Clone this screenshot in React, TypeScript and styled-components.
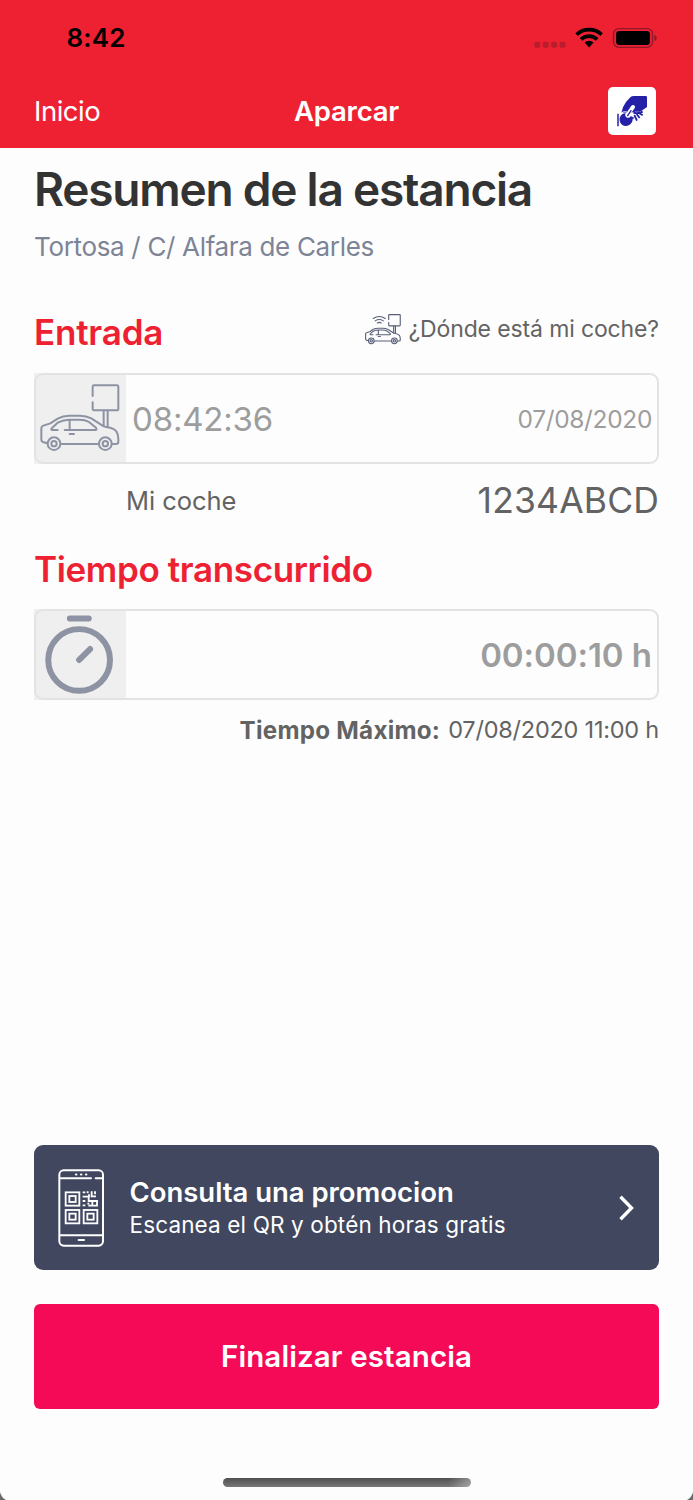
import React from 'react';
import styled, { createGlobalStyle } from 'styled-components';

const Global = createGlobalStyle`
  * { box-sizing: border-box; }
  body { margin: 0; background: #fdfdfd; font-family: Inter, "Liberation Sans", sans-serif; }
`;

const Screen = styled.div`
  position: relative;
  display: flex;
  flex-direction: column;
  width: 693px;
  height: 1500px;
  overflow: hidden;
  background: #fdfdfd;
`;

const Header = styled.header`
  height: 147.6px;
  background: #ee2133;
`;

const StatusBar = styled.div`
  display: flex;
  align-items: center;
  justify-content: space-between;
  height: 76px;
  padding: 0 36.5px 0 66.5px;
`;

const NavBar = styled.nav`
  display: grid;
  grid-template-columns: 1fr auto 1fr;
  align-items: center;
  height: 70px;
  padding: 0 37px 0 34px;
`;

const Label = styled.span<{ $size: number; $weight?: number; $color: string; $spacing?: number }>`
  font-size: ${p => p.$size}px;
  font-weight: ${p => p.$weight ?? 400};
  color: ${p => p.$color};
  letter-spacing: ${p => p.$spacing ?? 0}px;
  line-height: 1.2;
  white-space: nowrap;
`;

const NavTitle = styled(Label)`
  padding-left: 3px;
`;

const LogoTile = styled.div`
  justify-self: end;
  width: 48px;
  height: 48px;
  border-radius: 5px;
  background: #fff;
  svg { display: block; }
`;

const Main = styled.main`
  display: flex;
  flex: 1;
  flex-direction: column;
  padding: 0 34px;
`;

const Row = styled.div<{ $height: number; $indent?: number; $top?: number; $bottom?: number }>`
  display: flex;
  align-items: center;
  justify-content: space-between;
  height: ${p => p.$height}px;
  padding: ${p => p.$top ?? 0}px 0 ${p => p.$bottom ?? 0}px ${p => p.$indent ?? 0}px;
`;

const RightRow = styled(Row)`
  justify-content: flex-end;
  gap: 8px;
`;

const FindCar = styled.div`
  display: flex;
  align-items: center;
  gap: 7px;
  margin-top: -5px;
`;

const Field = styled.div`
  position: relative;
  display: flex;
  align-items: center;
  height: 91px;
  padding-right: 7px;
  &::after {
    content: '';
    position: absolute;
    inset: 0;
    border: 2px solid #e3e3e3;
    border-radius: 9px;
  }
`;

const FieldIcon = styled.div`
  display: flex;
  align-items: center;
  justify-content: center;
  width: 91.6px;
  height: 91px;
  margin-right: 6.5px;
  background: #efefef;
`;

const FieldText = styled(Label)`
  padding-top: 3px;
`;

const FieldEnd = styled.div`
  display: flex;
  margin-left: auto;
`;

const Promo = styled.button`
  display: flex;
  align-items: center;
  height: 125px;
  margin-top: auto;
  padding: 0 24px;
  border: 0;
  border-radius: 9px;
  background: #40475f;
  font-family: inherit;
  text-align: left;
`;

const PromoText = styled.span`
  display: flex;
  flex: 1;
  flex-direction: column;
  gap: 2px;
  margin: -2px 0 0 23.5px;
`;

const Finish = styled.button`
  height: 105px;
  margin: 34px 0 91px;
  padding: 1px 0 0;
  border: 0;
  border-radius: 6px;
  background: #f50a57;
  font-family: inherit;
`;

const HomeBar = styled.div`
  position: absolute;
  left: 222.5px;
  bottom: 13.5px;
  width: 248px;
  height: 9px;
  border-radius: 4.5px;
  background: linear-gradient(90deg, transparent 91%, rgba(255, 255, 255, 0.35)), linear-gradient(#505050, #787878);
`;

const Corner = styled.svg<{ $right?: boolean }>`
  position: absolute;
  bottom: 0;
  ${p => (p.$right ? 'right: 0; transform: scaleX(-1);' : 'left: 0;')}
`;

const StatusIcons = () => (
  <svg width="124" height="24" viewBox="0 0 124 24">
    <g fill="#b91d2b">
      <rect x="1.300" y="15.800" width="6" height="6" rx="1.800" />
      <rect x="9.700" y="15.800" width="6" height="6" rx="1.800" />
      <rect x="18.100" y="15.800" width="6" height="6" rx="1.800" />
      <rect x="26.500" y="15.800" width="6" height="6" rx="1.800" />
    </g>
    <g fill="none" stroke="#000" strokeWidth="3.700">
      <path d="M43.600 8.600A18.200 18.200 0 0 1 68.600 8.600" />
      <path d="M48 13.400A11.600 11.600 0 0 1 64.200 13.400" />
    </g>
    <path d="M51.700 16.600A6.400 6.400 0 0 1 60.500 16.600L56.100 21.400Z" fill="#000" />
    <rect x="80.500" y="2.600" width="39" height="18.800" rx="5.400" fill="none" stroke="#8d1a26" strokeWidth="1.400" />
    <rect x="83.100" y="5" width="33.800" height="14" rx="3.200" fill="#000" />
    <path d="M121.300 8.800Q123.800 9.600 123.800 12Q123.800 14.400 121.300 15.200Z" fill="#8d1a26" />
  </svg>
);

const Logo = () => (
  <svg width="48" height="48" viewBox="0 0 144 144">
    <g fill="#2420a8">
      <path d="M40 77Q43 60 54 45L67 31Q71 27 78 27H113Q117 27 117 31V60L101 71Q92 76 82 74L62 78Z" />
      <path d="M53 79Q49 88 57 92Q64 94 69 88L74 96Q74 107 65 113Q53 121 43 114Q33 106 35 93Q39 79 53 79Z" />
    </g>
    <path d="M40 77Q48 73 57 75" fill="none" stroke="#fff" strokeWidth="3" />
    <path d="M61 80L75 60" stroke="#fff" strokeWidth="12" strokeLinecap="round" />
    <path d="M59 86L69 71" stroke="#2420a8" strokeWidth="4" strokeLinecap="round" />
    <path d="M30 80V118" stroke="#2420a8" strokeWidth="4.500" />
    <path d="M67 90L77 94M76 77Q90 81 104 74M79 84L87 101M86 81L95 93M93 78L104 85" fill="none" stroke="#2420a8" strokeWidth="5.500" />
  </svg>
);

const CarIcon = ({ width, color, signal }: { width: number; color: string; signal?: boolean }) => (
  <svg width={width} height={(width * 202) / 240} viewBox="45 58 240 202" fill="none" stroke={color} strokeWidth={signal ? 7.5 : 6} strokeLinecap="round" strokeLinejoin="round">
    <path d="M203 94V66Q203 62 207 62H276Q280 62 280 66V132Q280 137 275 137H207Q203 137 203 133V113" />
    <path d="M236 138V184M248 138V187" />
    <path d="M67 236L54 232Q49 230 49 225V191Q49 185 55 183L76 176L98 162Q114 153 132 153H165Q184 153 199 161L228 180Q235 186 247 188Q265 190 274 200Q280 209 280 222V231Q280 238 273 238H262M108 238H220" />
    <path d="M98 196H82Q76 195 81 190L98 174Q116 165 132 165H164Q180 165 192 172L213 189Q217 196 211 196H119M134 166V195M134 208H147" />
    <circle cx="87" cy="237" r="19" />
    <circle cx="87" cy="237" r="8" />
    <circle cx="241" cy="237" r="19" />
    <circle cx="241" cy="237" r="8" />
    {signal && <path d="M100 88Q140 62 180 88M113 104Q140 86 167 104M127 118Q140 109 153 118" />}
  </svg>
);

const TimerIcon = () => (
  <svg width="92" height="91" viewBox="27 208 276 273" fill="none" stroke="#8d93a3" strokeWidth="18" strokeLinecap="round">
    <path d="M135 236H192M163 361L196 328" />
    <circle cx="163" cy="361" r="93" />
  </svg>
);

const PhoneQrIcon = () => (
  <svg width="48" height="78" viewBox="54 56 144 234" fill="none" stroke="#fff" strokeWidth="6" strokeLinecap="round">
    <rect x="58" y="60" width="131" height="226" rx="13" />
    <path d="M60 84H153M167 84H188M60 255H188" />
    <path d="M108 72.500H109M123 72.500H124M138 72.500H139M116 269H132" strokeWidth="6.500" />
    <g strokeLinecap="butt" strokeWidth="5.500">
      <rect x="77" y="126" width="41" height="40" />
      <rect x="88" y="137" width="19" height="18" />
      <rect x="77" y="179" width="41" height="40" />
      <rect x="88" y="190" width="19" height="18" />
      <rect x="131" y="179" width="41" height="40" />
      <rect x="142" y="190" width="19" height="18" />
      <path d="M128 126H136M143 123V129M128 139H147V132M155 123V138H168M165 123V132M128 152H136M128 165H136M146 138V152H174M157 152V166M145 166H171V152M142 160H148" />
    </g>
  </svg>
);

export default function App() {
  return (
    <Screen>
      <Global />
      <Header>
        <StatusBar>
          <Label $size={26} $weight={600} $color="#000" $spacing={0.2}>8:42</Label>
          <StatusIcons />
        </StatusBar>
        <NavBar>
          <Label $size={27.5} $color="#fff" $spacing={-0.5}>Inicio</Label>
          <NavTitle $size={27.5} $weight={600} $color="#fff" $spacing={-0.2}>Aparcar</NavTitle>
          <LogoTile><Logo /></LogoTile>
        </NavBar>
      </Header>
      <Main>
        <Row $height={84}>
          <Label as="h1" $size={46} $weight={600} $color="#333" $spacing={-1.21}>Resumen de la estancia</Label>
        </Row>
        <Row $height={31} $bottom={1}>
          <Label $size={26} $color="#7c8496" $spacing={-0.33}>Tortosa / C/ Alfara de Carles</Label>
        </Row>
        <Row $height={110} $top={29}>
          <Label as="h2" $size={35} $weight={600} $color="#ee2133" $spacing={-0.2}>Entrada</Label>
          <FindCar>
            <CarIcon width={36} color="#596078" signal />
            <Label $size={23} $color="#636363" $spacing={-0.13}>¿Dónde está mi coche?</Label>
          </FindCar>
        </Row>
        <Field>
          <FieldIcon><CarIcon width={80} color="#8d93a3" /></FieldIcon>
          <FieldText $size={33} $color="#9d9d9d" $spacing={-0.2}>08:42:36</FieldText>
          <FieldEnd><FieldText $size={24.5} $color="#9d9d9d" $spacing={-0.35}>07/08/2020</FieldText></FieldEnd>
        </Field>
        <Row $height={73} $indent={92} $top={2}>
          <Label $size={25.5} $color="#636363" $spacing={-0.05}>Mi coche</Label>
          <Label $size={35.5} $color="#636363" $spacing={0.15}>1234ABCD</Label>
        </Row>
        <Row $height={72} $bottom={8}>
          <Label as="h2" $size={35} $weight={600} $color="#ee2133" $spacing={-0.37}>Tiempo transcurrido</Label>
        </Row>
        <Field>
          <FieldIcon><TimerIcon /></FieldIcon>
          <FieldEnd><FieldText $size={33} $weight={600} $color="#9d9d9d" $spacing={-0.05}>00:00:10 h</FieldText></FieldEnd>
        </Field>
        <RightRow $height={59} $top={2}>
          <Label $size={24.2} $weight={700} $color="#636363" $spacing={0.25}>Tiempo Máximo:</Label>
          <Label $size={23.5} $color="#636363" $spacing={-0.23}>07/08/2020 11:00 h</Label>
        </RightRow>
        <Promo>
          <PhoneQrIcon />
          <PromoText>
            <Label $size={27.5} $weight={600} $color="#fff" $spacing={-0.03}>Consulta una promocion</Label>
            <Label $size={22.5} $color="#fff" $spacing={0.14}>Escanea el QR y obtén horas gratis</Label>
          </PromoText>
          <svg width="17" height="28" viewBox="0 0 17 28" fill="none" stroke="#fff" strokeWidth="3.400">
            <path d="M2.500 2.800L13.500 14L2.500 25.200" />
          </svg>
        </Promo>
        <Finish><Label $size={29.5} $weight={600} $color="#fff" $spacing={0.1}>Finalizar estancia</Label></Finish>
      </Main>
      <HomeBar />
      <Corner width="6" height="8"><path d="M0 0Q1 5 6 8H0Z" fill="#6a6a6a" /></Corner>
      <Corner $right width="6" height="8"><path d="M0 0Q1 5 6 8H0Z" fill="#6a6a6a" /></Corner>
    </Screen>
  );
}
